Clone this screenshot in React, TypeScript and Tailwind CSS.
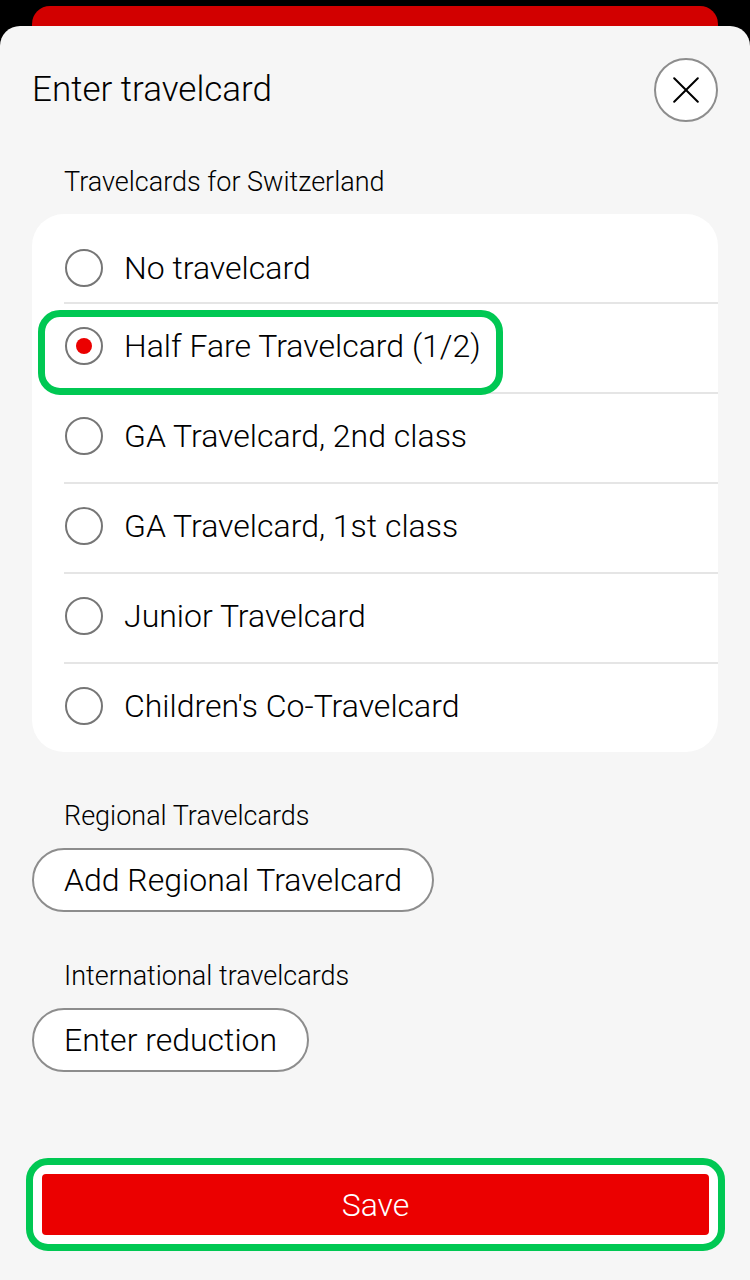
import { useState } from "react"

const travelcards = [
    { id: "none", label: "No travelcard" },
    { id: "half-fare", label: "Half Fare Travelcard (1/2)", highlighted: true },
    { id: "ga-2", label: "GA Travelcard, 2nd class" },
    { id: "ga-1", label: "GA Travelcard, 1st class" },
    { id: "junior", label: "Junior Travelcard" },
    { id: "children", label: "Children's Co-Travelcard" },
]

function CloseIcon() {
    return (
        <svg viewBox="0 0 26 26" className="size-[26px]" fill="none" stroke="#000" strokeWidth="2" strokeLinecap="round" aria-hidden="true">
            <path d="M1.2 1.2 24.8 24.8M24.8 1.2 1.2 24.8" />
        </svg>
    )
}

export default function App() {
    const [selected, setSelected] = useState("half-fare")

    return (
        <div className="flex min-h-screen flex-col bg-black font-['Roboto','Liberation_Sans',sans-serif] font-light text-black">
            {/* Screen behind the sheet */}
            <div className="mx-8 mt-[6px] h-5 rounded-t-[18px] bg-[#d20000]" />

            <main className="flex flex-1 flex-col rounded-t-[20px] bg-[#f6f6f6] px-8 pt-8">
                <header className="flex items-center justify-between">
                    <h1 className="text-[35px] leading-10">Enter travelcard</h1>
                    <button
                        type="button"
                        aria-label="Close"
                        className="flex size-16 items-center justify-center rounded-full border-2 border-[#8d8d8d] bg-white"
                    >
                        <CloseIcon />
                    </button>
                </header>

                <fieldset className="mt-10">
                    <legend className="ml-8 text-[27px] leading-10">Travelcards for Switzerland</legend>
                    <div className="mt-3 rounded-[32px] bg-white pt-5 pl-8">
                        {travelcards.map((card) => (
                            <label
                                key={card.id}
                                className="relative flex h-[90px] items-center gap-5 border-b-2 border-[#e5e5e5] pb-1 first:h-[70px] first:pb-0 last:h-[88px] last:border-0"
                            >
                                <input
                                    type="radio"
                                    name="travelcard"
                                    checked={selected === card.id}
                                    onChange={() => setSelected(card.id)}
                                    className="mx-px flex size-[38px] appearance-none items-center justify-center rounded-full border-2 border-[#767676] bg-white before:size-4 before:rounded-full checked:before:bg-[#eb0000]"
                                />
                                <span className="text-[32px] leading-10">{card.label}</span>
                                {card.highlighted && (
                                    <span className="pointer-events-none absolute top-[6px] -left-[26px] h-[85px] w-[465px] rounded-[22px] border-[7px] border-[#00c853]" />
                                )}
                            </label>
                        ))}
                    </div>
                </fieldset>

                <section className="mt-11">
                    <h2 className="ml-8 text-[27px] leading-10">Regional Travelcards</h2>
                    <button type="button" className="mt-3 h-16 rounded-full border-2 border-[#8d8d8d] bg-white px-[30px] text-[32px] leading-10">
                        Add Regional Travelcard
                    </button>
                </section>

                <section className="mt-11">
                    <h2 className="ml-8 text-[27px] leading-10">International travelcards</h2>
                    <button type="button" className="mt-3 h-16 rounded-full border-2 border-[#8d8d8d] bg-white px-[30px] text-[32px] leading-10">
                        Enter reduction
                    </button>
                </section>

                <div className="-mr-[7px] -ml-[6px] mt-auto mb-[29px] rounded-[22px] border-[7px] border-[#00c853] bg-white p-[9px]">
                    <button type="button" className="block h-[61px] w-full rounded bg-[#eb0000] text-[32px] leading-10 text-white">
                        Save
                    </button>
                </div>
            </main>
        </div>
    )
}
